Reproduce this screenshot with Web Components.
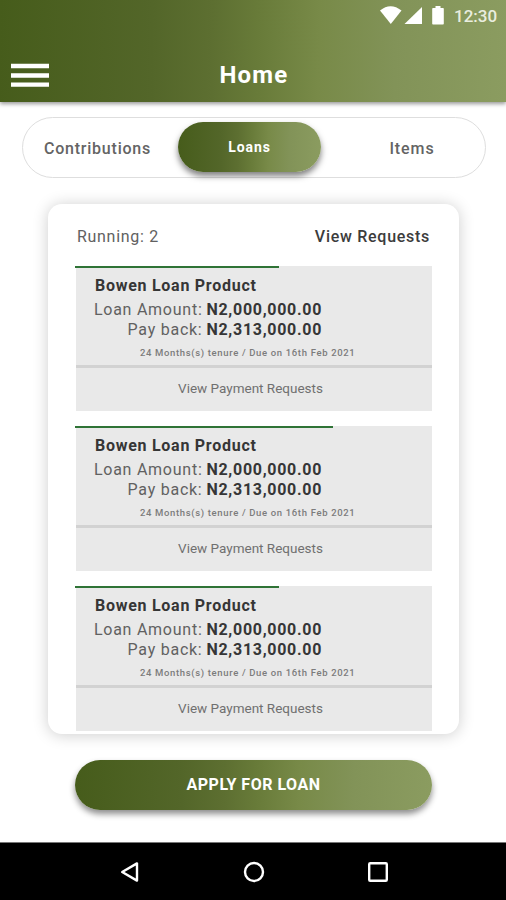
<!DOCTYPE html>
<html lang="en">
<head>
<meta charset="utf-8">
<title>Home</title>
<style>
    body {
        margin: 0;
        background-color: white;
        font-family: Roboto, sans-serif;
        --green: linear-gradient(91deg, #465c1b 0%, #536629 30%, #5d6f31 42%, #687b39 51%, #788a48 63%, #829358 78%, #8b9c60 100%);
    }
</style>
</head>
<body>
<c-screen>
    <c-header slot="header" time="12:30">Home</c-header>
    <c-tabs>
        <c-tab style="--ls: 0.78px">Contributions</c-tab>
        <c-tab active>Loans</c-tab>
        <c-tab style="--ls: 0.9px; --shift: 3px">Items</c-tab>
    </c-tabs>
    <c-card>
        <span slot="left">Running: 2</span>
        <span slot="right">View Requests</span>
        <c-loan progress="204" amount="N2,000,000.00" payback="N2,313,000.00" tenure="24 Months(s) tenure / Due on 16th Feb 2021">Bowen Loan Product</c-loan>
        <c-loan progress="258" amount="N2,000,000.00" payback="N2,313,000.00" tenure="24 Months(s) tenure / Due on 16th Feb 2021">Bowen Loan Product</c-loan>
        <c-loan progress="204" amount="N2,000,000.00" payback="N2,313,000.00" tenure="24 Months(s) tenure / Due on 16th Feb 2021">Bowen Loan Product</c-loan>
    </c-card>
    <c-button>APPLY FOR LOAN</c-button>
    <c-navbar slot="footer"></c-navbar>
</c-screen>

<script>
function attach(el, html) {
    const template = document.createElement('template');
    template.innerHTML = html;
    el.attachShadow({mode: 'open'});
    el.shadowRoot.appendChild(template.content.cloneNode(true));
}

class cScreen extends HTMLElement {
    constructor() {
        super();
        attach(this, `
            <style>
                :host {
                    display: flex;
                    flex-direction: column;
                    width: 506px;
                    height: 900px;
                    overflow: hidden;
                }

                main {
                    flex: 1;
                    display: flex;
                    flex-direction: column;
                }
            </style>
            <slot name="header"></slot>
            <main><slot></slot></main>
            <slot name="footer"></slot>
        `);
    }
}

class cHeader extends HTMLElement {
    constructor() {
        super();
        attach(this, `
            <style>
                :host {
                    display: block;
                    box-sizing: border-box;
                    height: 102px;
                    background: var(--green);
                    box-shadow: 0 2px 4px rgba(0, 0, 0, 0.4);
                    color: white;
                }

                #status {
                    display: flex;
                    justify-content: flex-end;
                    height: 32px;
                    padding-right: 8px;
                }

                #time {
                    width: 44px;
                    margin-left: 9px;
                    font-size: 17px;
                    font-weight: 500;
                    line-height: 32px;
                    color: #e9eddf;
                }

                #bar {
                    display: grid;
                    grid-template-columns: 38px 1fr 38px;
                    align-items: center;
                    padding: 0 11px;
                    height: 86px;
                }

                #title {
                    padding-left: 2px;
                    text-align: center;
                    font-size: 24px;
                    font-weight: 700;
                    letter-spacing: 1.2px;
                    line-height: 28px;
                }
            </style>
            <div id="status">
                <svg width="66" height="32" viewBox="0 0 66 32" fill="#fff">
                    <path d="M1 10.5Q11.500 2 22.500 10.500L11.800 24Z"/>
                    <path d="M43 7V24H25.500Z"/>
                    <path d="M56.500 6h5v2h2.500q.8 0 .8.800v15q0 .8-.8.800h-10q-.8 0-.8-.8v-15q0-.8.8-.8h2.500Z"/>
                </svg>
                <span id="time"></span>
            </div>
            <div id="bar">
                <svg width="38" height="24" viewBox="0 0 38 24" fill="#fff">
                    <path d="M0 .8H38V5.200H0ZM0 10.300H38V14.700H0ZM0 19.400H38V23.800H0Z"/>
                </svg>
                <div id="title"><slot></slot></div>
            </div>
        `);
    }

    connectedCallback() {
        this.shadowRoot.querySelector('#time').textContent = this.getAttribute('time');
    }
}

class cTabs extends HTMLElement {
    constructor() {
        super();
        attach(this, `
            <style>
                :host {
                    display: grid;
                    grid-template-columns: 149px 1fr 149px;
                    column-gap: 6px;
                    box-sizing: border-box;
                    margin: 15px 20px 0 22px;
                    height: 61px;
                    padding: 4px 0;
                    border: 1px solid #dedede;
                    border-radius: 31px;
                }
            </style>
            <slot></slot>
        `);
    }
}

class cTab extends HTMLElement {
    constructor() {
        super();
        attach(this, `
            <style>
                :host {
                    display: block;
                    box-sizing: border-box;
                    height: 50px;
                    padding-left: var(--shift, 0);
                    line-height: 53px;
                    text-align: center;
                    font-size: 16px;
                    font-weight: 500;
                    letter-spacing: var(--ls);
                    color: #646464;
                }

                :host([active]) {
                    width: 143px;
                    border-radius: 25px;
                    background: var(--green);
                    box-shadow: 0 4px 6px rgba(0, 0, 0, 0.5);
                    color: white;
                    font-size: 14px;
                    font-weight: 700;
                    line-height: 50px;
                    letter-spacing: 0.9px;
                }
            </style>
            <slot></slot>
        `);
    }
}

class cCard extends HTMLElement {
    constructor() {
        super();
        attach(this, `
            <style>
                :host {
                    display: flex;
                    flex-direction: column;
                    box-sizing: border-box;
                    width: 411px;
                    height: 530px;
                    margin: 26px 0 0 48px;
                    padding: 20px 27px 0 28px;
                    border-radius: 14px;
                    box-shadow: 0 1px 16px rgba(0, 0, 0, 0.2);
                    background-color: white;
                }

                #head {
                    display: flex;
                    justify-content: space-between;
                    height: 42px;
                    padding: 0 1px;
                    font-size: 16px;
                    line-height: 25px;
                }

                #left {
                    color: #616161;
                    letter-spacing: 0.7px;
                }

                #right {
                    color: #3c3c3c;
                    font-weight: 500;
                    letter-spacing: 0.72px;
                    margin-right: 1px;
                }

                #list {
                    display: flex;
                    flex-direction: column;
                    gap: 15px;
                }
            </style>
            <div id="head">
                <div id="left"><slot name="left"></slot></div>
                <div id="right"><slot name="right"></slot></div>
            </div>
            <div id="list"><slot></slot></div>
        `);
    }
}

class cLoan extends HTMLElement {
    constructor() {
        super();
        attach(this, `
            <style>
                :host {
                    display: flex;
                    flex-direction: column;
                    height: 145px;
                    background-color: #e9e9e9;
                    color: #616161;
                }

                #progress {
                    height: 2px;
                    margin-left: -1px;
                    background-color: #2f7336;
                }

                #name {
                    margin: 8px 0 4px 19px;
                    font-size: 16px;
                    font-weight: 700;
                    line-height: 20px;
                    letter-spacing: 0.73px;
                    color: #363636;
                }

                #rows {
                    display: grid;
                    grid-template-columns: 126.5px 1fr;
                    column-gap: 4px;
                    font-size: 16px;
                    line-height: 20px;
                    letter-spacing: 0.75px;
                }

                .label {
                    text-align: right;
                }

                b {
                    font-weight: 700;
                    letter-spacing: 0.7px;
                    color: #363636;
                }

                #tenure {
                    margin: 7px 0 0 64px;
                    height: 18px;
                    font-size: 9.5px;
                    font-weight: 500;
                    line-height: 12px;
                    letter-spacing: 0.65px;
                    white-space: nowrap;
                    color: #7c7c7c;
                }

                #more {
                    flex: 1;
                    box-sizing: border-box;
                    border-top: 3px solid #d2d2d2;
                    padding: 10px 7px 0 0;
                    text-align: center;
                    font-size: 13.5px;
                    line-height: 20px;
                    color: #707070;
                }
            </style>
            <div id="progress"></div>
            <div id="name"><slot></slot></div>
            <div id="rows">
                <span class="label">Loan Amount:</span><b id="amount"></b>
                <span class="label">Pay back:</span><b id="payback"></b>
            </div>
            <div id="tenure"></div>
            <div id="more">View Payment Requests</div>
        `);
    }

    static get observedAttributes() { return ['progress','amount','payback','tenure']; }
    attributeChangedCallback(name, oldValue, newValue) {
        const el = this.shadowRoot.querySelector('#' + name);
        if (name === 'progress') {
            el.style.width = newValue + 'px';
        } else {
            el.textContent = newValue;
        }
    }
}

class cButton extends HTMLElement {
    constructor() {
        super();
        attach(this, `
            <style>
                :host {
                    display: block;
                    width: 357px;
                    height: 50px;
                    margin: 26px 0 0 75px;
                    border-radius: 25px;
                    background: var(--green);
                    box-shadow: 0 4px 6px rgba(0, 0, 0, 0.45);
                    color: white;
                    text-align: center;
                    font-size: 16px;
                    font-weight: 700;
                    line-height: 50px;
                    letter-spacing: 0.5px;
                }
            </style>
            <slot></slot>
        `);
    }
}

class cNavbar extends HTMLElement {
    constructor() {
        super();
        attach(this, `
            <style>
                :host {
                    display: flex;
                    align-items: center;
                    justify-content: center;
                    gap: 102px;
                    box-sizing: border-box;
                    height: 58px;
                    padding-left: 1px;
                    border-top: 1px solid #777;
                    background-color: black;
                }

                svg {
                    fill: none;
                    stroke: white;
                    stroke-width: 2.4;
                    stroke-linejoin: round;
                }
            </style>
            <svg width="22" height="22" viewBox="0 0 22 22"><path d="M3.200 11L18 2.400V19.600Z"/></svg>
            <svg width="22" height="22" viewBox="0 0 22 22"><circle cx="11" cy="11" r="9"/></svg>
            <svg width="22" height="22" viewBox="0 0 22 22"><rect x="2.200" y="2.200" width="17.600" height="17.600" rx="1"/></svg>
        `);
    }
}

customElements.define('c-screen', cScreen);
customElements.define('c-header', cHeader);
customElements.define('c-tabs', cTabs);
customElements.define('c-tab', cTab);
customElements.define('c-card', cCard);
customElements.define('c-loan', cLoan);
customElements.define('c-button', cButton);
customElements.define('c-navbar', cNavbar);
</script>
</body>
</html>
